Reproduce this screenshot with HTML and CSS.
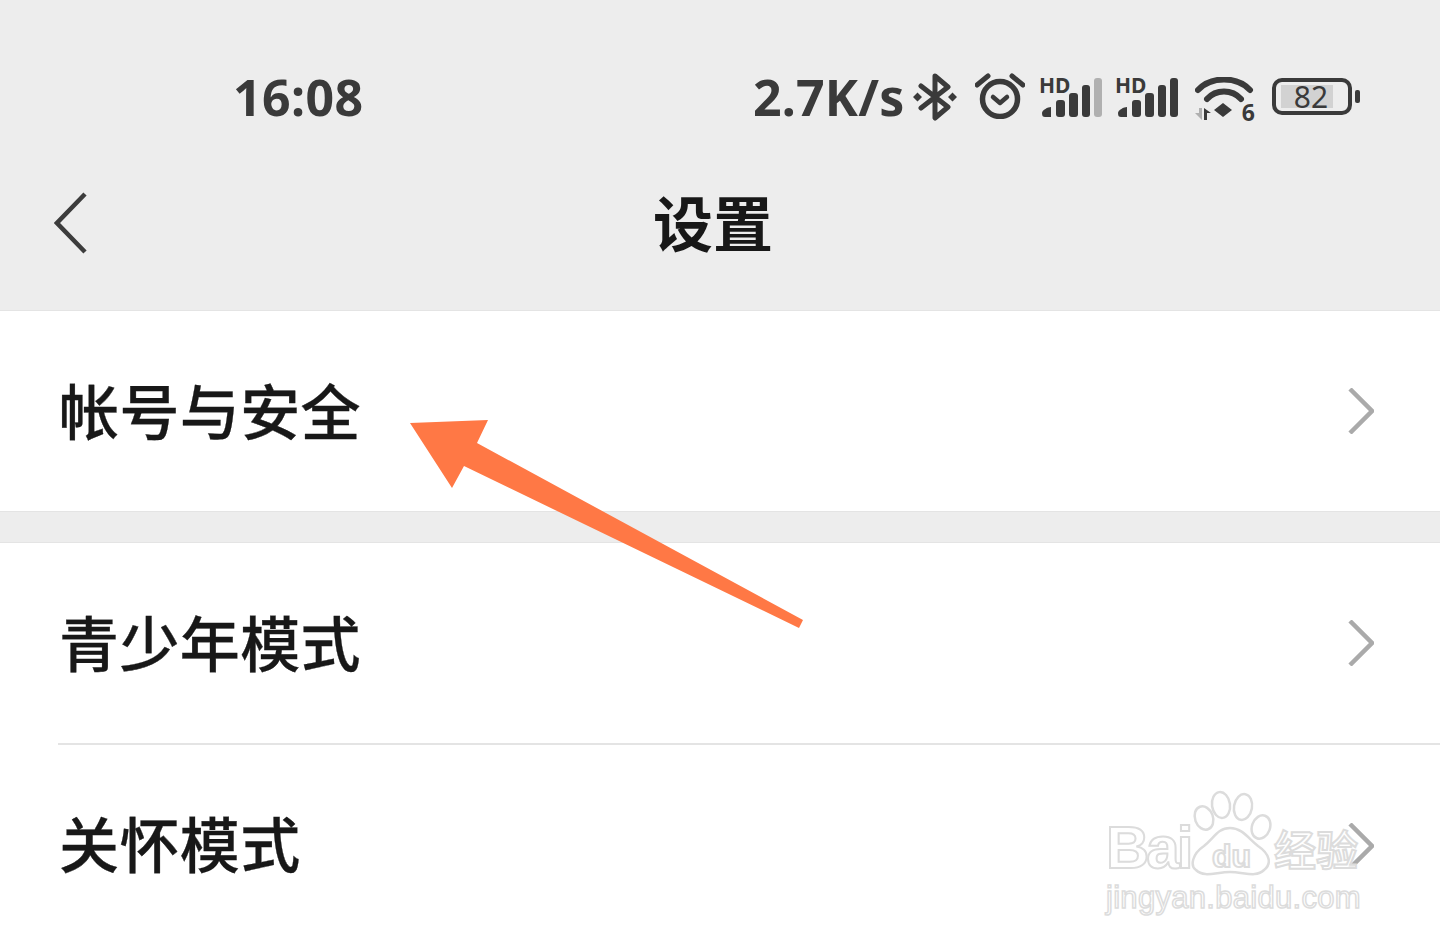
FILE: index.html
```html
<!doctype html>
<html>
<head>
<meta charset="UTF-8">
<title>设置</title>
<link rel="stylesheet" href="styles.css">
</head>
<body>
<div class="page">
  <div class="head">
    <div class="status">
      <span class="time">16:08</span>
      <span class="speed">2.7K/s</span>
      <div class="icons">
        <svg class="ic-bt" width="44" height="48" viewBox="0 0 44 48"><path d="M8 13 35 34 22 45V3L35 14 8 35" fill="none" stroke="#3a3a3a" stroke-width="5" stroke-linejoin="round" stroke-linecap="round"/><path d="M0 24l4.500-4.500 4.500 4.500-4.500 4.500zM35 24l4.500-4.500 4.500 4.500-4.500 4.500z" fill="#3a3a3a"/></svg>
        <svg class="ic-alarm" width="50" height="46" viewBox="0 0 50 46"><circle cx="25" cy="26" r="17.500" fill="none" stroke="#3a3a3a" stroke-width="5.500"/><path d="M18 24l7 6 7-6" fill="none" stroke="#3a3a3a" stroke-width="4.500" stroke-linecap="round" stroke-linejoin="round"/><path d="M2 12 13 3M48 12 37 3" fill="none" stroke="#3a3a3a" stroke-width="5" stroke-linecap="round"/></svg>
        <div class="signal">
          <span class="hd">HD</span>
          <svg width="64" height="40" viewBox="0 0 64 40"><g fill="#3a3a3a"><path d="M3 35C3 32 9 29 12 29V39H6C4 39 3 38 3 35Z"/><rect x="17" y="22" width="9" height="17" rx="3"/><rect x="30" y="15" width="9" height="24" rx="3"/><rect x="43" y="7" width="8" height="32" rx="3"/><rect x="55" y="0" width="8" height="39" rx="3" fill="#b0b0b0"/></g></svg>
        </div>
        <div class="signal sig-two">
          <span class="hd">HD</span>
          <svg width="64" height="40" viewBox="0 0 64 40"><g fill="#3a3a3a"><path d="M3 35C3 32 9 29 12 29V39H6C4 39 3 38 3 35Z"/><rect x="17" y="22" width="9" height="17" rx="3"/><rect x="30" y="15" width="9" height="24" rx="3"/><rect x="43" y="7" width="8" height="32" rx="3"/><rect x="55" y="0" width="8" height="39" rx="3"/></g></svg>
        </div>
        <div class="wifi">
          <svg width="59" height="44" viewBox="0 0 59 44"><g fill="none" stroke="#3a3a3a" stroke-width="6" stroke-linecap="round"><path d="M3 13C16-1 42-1 55 13"/><path d="M12 22C21 12 37 12 46 22"/></g><path d="M19 33 28 26 37 33 28 40z" fill="#3a3a3a"/><path d="M0 36h4v-5h3v12z" fill="#b0b0b0"/><path d="M9 43V31l7 5h-4v7z" fill="#3a3a3a"/></svg>
          <span class="wifi-six">6</span>
        </div>
        <div class="battery">
          <div class="batt-body"><span class="batt-level">82</span></div>
          <span class="batt-tip"></span>
        </div>
      </div>
    </div>
    <div class="nav">
      <svg class="back" width="33" height="62" viewBox="0 0 33 62"><path d="M31 2 3 31l28 29" fill="none" stroke="#3c3c3c" stroke-width="4.500"/></svg>
      <span class="title">设置</span>
    </div>
  </div>

  <div class="group">
    <div class="row">
      <span>帐号与安全</span>
      <svg class="chev" width="26" height="46" viewBox="0 0 26 46"><path d="M2 1l22 22L2 45" fill="none" stroke="#aaa" stroke-width="4.500"/></svg>
    </div>
  </div>
  <div class="group">
    <div class="row line">
      <span>青少年模式</span>
      <svg class="chev" width="26" height="46" viewBox="0 0 26 46"><path d="M2 1l22 22L2 45" fill="none" stroke="#aaa" stroke-width="4.500"/></svg>
    </div>
    <div class="row last">
      <span>关怀模式</span>
      <svg class="chev" width="26" height="46" viewBox="0 0 26 46"><path d="M2 1l22 22L2 45" fill="none" stroke="#aaa" stroke-width="4.500"/></svg>
    </div>
  </div>

  <!-- annotation arrow over the list -->
  <svg class="arrow" width="1440" height="945" viewBox="0 0 1440 945"><path d="M410 423 488 420 477 443 803 620 799 628 464 466 452 488z" fill="#ff7845"/></svg>

  <!-- watermark -->
  <div class="mark">
    <svg class="paw" width="85" height="90" viewBox="0 0 85 90"><g fill="#fff" fill-opacity=".8" stroke="#dcdcdc" stroke-width="2.500"><ellipse cx="14" cy="28" rx="9" ry="12" transform="rotate(-20 14 28)"/><ellipse cx="31" cy="15" rx="9" ry="13" transform="rotate(-8 31 15)"/><ellipse cx="53" cy="17" rx="9" ry="13" transform="rotate(10 53 17)"/><ellipse cx="71" cy="37" rx="9" ry="12" transform="rotate(20 71 37)"/><path d="M40 38C28 38 24 48 14 56 2 64 0 76 6 80 14 88 26 82 40 82 54 82 66 88 74 80 82 74 80 64 68 56 58 48 52 38 40 38Z"/></g></svg>
    <span class="mark-bai">Bai</span>
    <span class="mark-du">du</span>
    <span class="mark-cn">经验</span>
    <span class="mark-url">jingyan.baidu.com</span>
  </div>
</div>
</body>
</html>
```

FILE: styles.css
```css
html, body {
  margin: 0;
  padding: 0;
}
body {
  font-family: "Noto Sans CJK SC", "Noto Sans", sans-serif;
  color: #181818;
  background-color: #ededed;
}
.page {
  position: relative;
  width: 1440px;
  height: 945px;
  overflow: hidden;
  background-color: #ededed;
}
.head {
  height: 311px;
  box-sizing: border-box;
  border-bottom: 1px solid #e4e4e4;
}
.status {
  display: flex;
  align-items: center;
  height: 194px;
  box-sizing: border-box;
  padding-left: 233px;
  color: #3a3a3a;
}
.time {
  width: 520px;
  margin-top: -1px;
  font-family: "Noto Sans", sans-serif;
  font-size: 50px;
  font-weight: 700;
  letter-spacing: 0.4px;
}
.speed {
  width: 160px;
  margin-top: -1px;
  font-family: "Noto Sans", sans-serif;
  font-size: 50px;
  font-weight: 700;
  letter-spacing: 0.2px;
}
.icons {
  display: flex;
  align-items: center;
}
.ic-alarm {
  margin-left: 18px;
  margin-top: -3px;
}
.signal {
  position: relative;
  width: 64px;
  height: 40px;
  margin-left: 14px;
  margin-top: 2px;
}
.sig-two {
  margin-left: 12px;
}
.signal svg {
  display: block;
}
.hd {
  position: absolute;
  left: 0;
  top: -3px;
  font-family: "Noto Sans", sans-serif;
  font-size: 21px;
  font-weight: 700;
  line-height: 20px;
}
.wifi {
  position: relative;
  width: 59px;
  height: 44px;
  margin-left: 16px;
  margin-top: 3px;
}
.wifi svg {
  display: block;
}
.wifi-six {
  position: absolute;
  right: -1px;
  bottom: -2px;
  font-family: "Noto Sans", sans-serif;
  font-size: 23px;
  font-weight: 700;
  line-height: 22px;
}
.battery {
  display: flex;
  align-items: center;
  gap: 3px;
  margin-left: 18px;
  margin-top: -1px;
}
.batt-body {
  width: 80px;
  height: 37px;
  box-sizing: border-box;
  border: 4px solid #3a3a3a;
  border-radius: 10px;
  padding: 3px 5px;
  display: flex;
}
.batt-level {
  width: 52px;
  padding-left: 8px;
  box-sizing: border-box;
  background-color: #d2d2d2;
  font-family: "Noto Sans", sans-serif;
  font-size: 30px;
  line-height: 23px;
  text-align: center;
}
.batt-tip {
  width: 5px;
  height: 13px;
  border-radius: 2px;
  background-color: #3a3a3a;
}
.nav {
  display: flex;
  align-items: center;
  height: 56px;
  padding-left: 54px;
}
.back {
  margin-top: 2px;
}
.title {
  margin-left: 566px;
  margin-bottom: 3px;
  font-size: 60px;
  font-weight: 700;
  line-height: 52px;
}
.group {
  background-color: #fff;
  margin-bottom: 30px;
  border-bottom: 1px solid #e4e4e4;
}
.row {
  display: flex;
  align-items: center;
  justify-content: space-between;
  height: 200px;
  box-sizing: border-box;
  margin-left: 59px;
  padding-right: 66px;
  font-size: 60px;
  font-weight: 500;
  letter-spacing: 0.4px;
  -webkit-text-stroke: 0.3px #181818;
}
.row span {
  margin-bottom: 6px;
}
.group + .group {
  border-top: 1px solid #e4e4e4;
}
.line {
  height: 202px;
  margin-left: 58px;
  padding-left: 1px;
  border-bottom: 2px solid #e4e4e4;
}
.last {
  height: 202px;
}
.row.last span {
  margin-bottom: 10px;
}
.arrow {
  position: absolute;
  left: 0;
  top: 0;
}
.mark {
  position: absolute;
  left: 1100px;
  top: 790px;
  width: 280px;
  height: 130px;
  color: rgba(255, 255, 255, 0.8);
  font-family: "Liberation Sans", sans-serif;
  font-weight: 700;
  -webkit-text-stroke: 2px #dcdcdc;
}
.paw {
  position: absolute;
  left: 90px;
  top: 0;
}
.mark-bai {
  position: absolute;
  left: 6px;
  top: 26px;
  font-size: 60px;
  line-height: 64px;
  letter-spacing: -3px;
}
.mark-du {
  position: absolute;
  left: 112px;
  top: 48px;
  font-size: 32px;
  line-height: 36px;
}
.mark-cn {
  position: absolute;
  left: 174px;
  top: 30px;
  font-family: "Noto Sans CJK SC", sans-serif;
  font-size: 42px;
  line-height: 56px;
  font-weight: 500;
}
.mark-url {
  position: absolute;
  left: 6px;
  top: 90px;
  font-size: 31px;
  line-height: 36px;
  font-weight: 400;
  letter-spacing: 0.3px;
  -webkit-text-stroke-width: 1.500px;
}
```
